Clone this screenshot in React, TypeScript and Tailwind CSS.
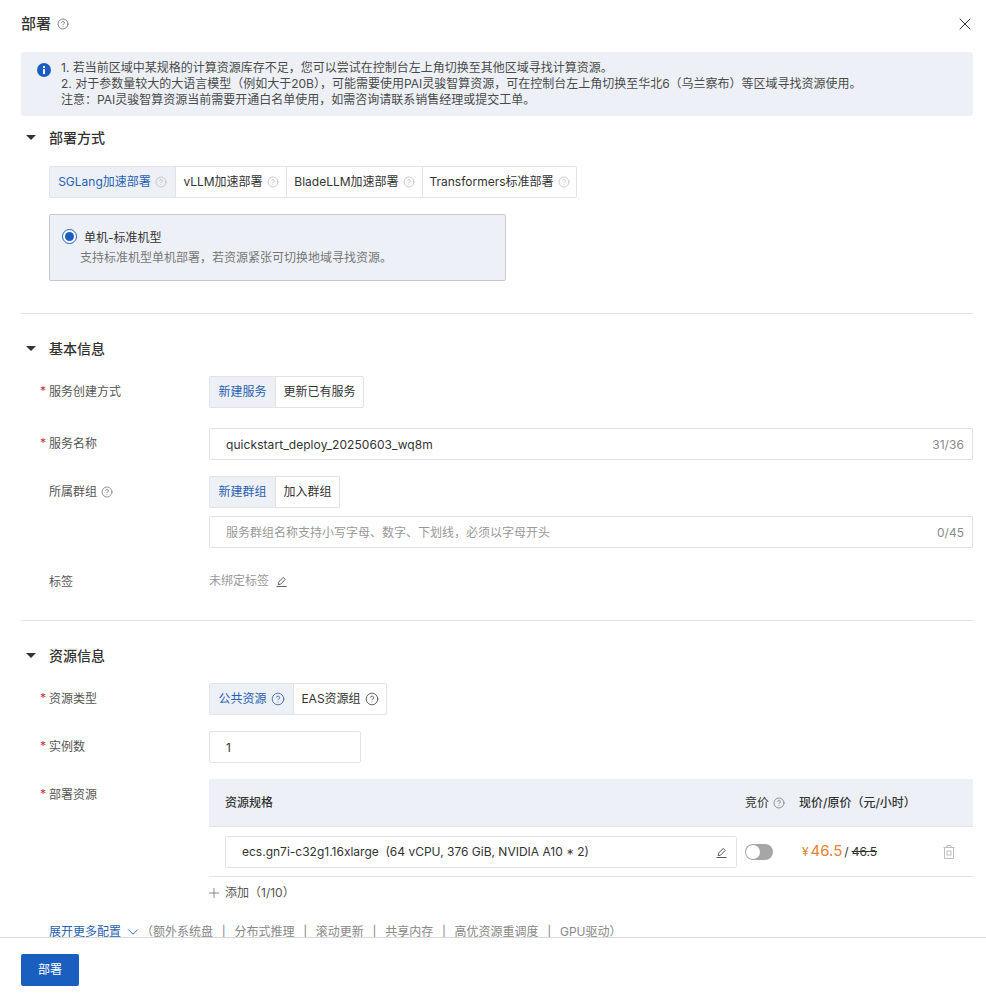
import { ChevronDown, CircleHelp, Plus, X } from 'lucide-react'
import type { ReactNode } from 'react'

function Section({ title, className = '' }: { title: string; className?: string }) {
  return (
    <div className={`flex items-center h-5 ${className}`}>
      <span className="ml-[5px] w-0 h-0 border-x-[5px] border-x-transparent border-t-[5px] border-t-[#333]" />
      <span className="ml-[13px] text-[14px] font-medium text-[#333]">{title}</span>
    </div>
  )
}

function Pencil({ className = '' }: { className?: string }) {
  return (
    <svg viewBox="0 0 11 11" fill="none" stroke="currentColor" strokeWidth="0.9" className={`w-[11px] h-[11px] ${className}`}>
      <path d="M0.5 10.5h10" />
      <path d="M2.2 8.6l0.4-2.4 4.6-4.8 2 2-4.6 4.8z" />
    </svg>
  )
}

function Row({ label, required, help, className = '', children }: { label: string; required?: boolean; help?: boolean; className?: string; children: ReactNode }) {
  return (
    <div className={`flex ${className}`}>
      <div className="relative w-[188px] pl-[28px] h-5 mt-[6px] flex items-center gap-[4px] text-[12px] text-[#555] shrink-0">
        {required && <span className="absolute left-[19px] top-0 text-[12px] text-[#c8323a]">*</span>}
        {label}
        {help && <CircleHelp size={12} strokeWidth={1.4} className="text-[#666]" />}
      </div>
      <div className="flex-1 min-w-0">{children}</div>
    </div>
  )
}

type Opt = { label: string; help?: boolean; width: string }

function Segmented({ options, helpClass = 'text-[#b5b5b5]', helpSize = 12 }: { options: Opt[]; helpClass?: string; helpSize?: number }) {
  return (
    <div className="flex h-8 w-fit border border-[#e3e3e3] rounded-[2px] text-[12px] text-[#333]">
      {options.map((o, i) => (
        <div
          key={o.label}
          className={`flex items-center justify-center gap-[4px] ${o.width} ${i === 0 ? 'bg-[#edf1f7] text-[#2a5fb0]' : 'border-l border-[#e3e3e3]'}`}
        >
          {o.label}
          {o.help && <CircleHelp size={helpSize} strokeWidth={1.4} className={i === 0 && helpSize > 12 ? 'text-[#2a5fb0]' : helpClass} />}
        </div>
      ))}
    </div>
  )
}

function TextBox({ children, right, className = '' }: { children: ReactNode; right?: string; className?: string }) {
  return (
    <div className={`flex items-center justify-between h-8 border border-[#e3e3e3] rounded-[2px] pt-px pl-4 pr-2 text-[12px] ${className}`}>
      {children}
      {right && <span className="text-[#8a8a8a]">{right}</span>}
    </div>
  )
}

const extras = ['额外系统盘', '分布式推理', '滚动更新', '共享内存', '高优资源重调度', 'GPU驱动']

export default function App() {
  return (
    <div
      className="flex flex-col h-[997px] bg-white overflow-hidden"
      style={{ fontFamily: 'Inter, "Noto Sans CJK SC", sans-serif' }}
    >
      <div className="flex-1 min-h-0 overflow-hidden pl-[21px] pr-[13px]">
        <div className="flex items-center h-[24px] mt-3 text-[#333]">
          <span className="text-[15px] font-medium">部署</span>
          <CircleHelp size={12} strokeWidth={1.4} className="ml-[6px] text-[#555]" />
          <X size={20} strokeWidth={1.2} className="ml-auto mr-[-2px] text-[#333]" />
        </div>

        <div className="flex mt-4 h-16 bg-[#edf1f7] rounded-[3px] pt-[8px] pl-[16px] text-[12px] leading-4 text-[#4a4a4a]">
          <svg viewBox="0 0 14 14" className="w-[14px] h-[14px] mt-[3px] shrink-0">
            <circle cx="7" cy="7" r="7" fill="#1a5fbf" />
            <rect x="6" y="6" width="2" height="5" fill="#fff" />
            <rect x="6" y="3" width="2" height="2" fill="#fff" />
          </svg>
          <div className="ml-[10px]">
            <p>1. 若当前区域中某规格的计算资源库存不足，您可以尝试在控制台左上角切换至其他区域寻找计算资源。</p>
            <p>2. 对于参数量较大的大语言模型（例如大于20B），可能需要使用PAI灵骏智算资源，可在控制台左上角切换至华北6（乌兰察布）等区域寻找资源使用。</p>
            <p>注意：PAI灵骏智算资源当前需要开通白名单使用，如需咨询请联系销售经理或提交工单。</p>
          </div>
        </div>

        <Section title="部署方式" className="mt-[11px]" />
        <div className="ml-[28px] mt-[19px]">
          <Segmented
            options={[
              { label: 'SGLang加速部署', help: true, width: 'w-[125px]' },
              { label: 'vLLM加速部署', help: true, width: 'w-[111px]' },
              { label: 'BladeLLM加速部署', help: true, width: 'w-[136px]' },
              { label: 'Transformers标准部署', help: true, width: 'w-[154px]' },
            ]}
          />
          <div className="flex w-[457px] h-[67px] mt-4 bg-[#edf1f7] border border-[#c9c9c9] rounded-[2px] pl-3 pt-[13px]">
            <span className="flex items-center justify-center w-[15px] h-[15px] mt-[1px] rounded-full border border-[#1a5fbf] bg-white">
              <span className="w-[9px] h-[9px] rounded-full bg-[#1a5fbf]" />
            </span>
            <div className="ml-[3px] text-[12px] leading-5">
              <div className="ml-[4px] text-[#333]">单机-标准机型</div>
              <div className="text-[#777]">支持标准机型单机部署，若资源紧张可切换地域寻找资源。</div>
            </div>
          </div>
        </div>

        <div className="border-t border-[#e3e3e3] mt-8" />

        <Section title="基本信息" className="mt-6" />
        <Row label="服务创建方式" required className="mt-[18px]">
          <Segmented
            options={[
              { label: '新建服务', width: 'w-[65px]' },
              { label: '更新已有服务', width: 'w-[88px]' },
            ]}
          />
        </Row>
        <Row label="服务名称" required className="mt-5">
          <TextBox right="31/36" className="text-[#333] tracking-[0.07px]">quickstart_deploy_20250603_wq8m</TextBox>
        </Row>
        <Row label="所属群组" help className="mt-4">
          <Segmented
            options={[
              { label: '新建群组', width: 'w-[65px]' },
              { label: '加入群组', width: 'w-[64px]' },
            ]}
          />
          <TextBox right="0/45" className="mt-2 text-[#999]">服务群组名称支持小写字母、数字、下划线，必须以字母开头</TextBox>
        </Row>
        <Row label="标签" className="mt-[18px]">
          <div className="flex items-center h-8 mt-[-1px] gap-[7px] text-[12px] text-[#999]">
            未绑定标签
            <Pencil className="text-[#555]" />
          </div>
        </Row>

        <div className="border-t border-[#e3e3e3] mt-[23px]" />

        <Section title="资源信息" className="mt-6" />
        <Row label="资源类型" required className="mt-[18px]">
          <Segmented
            helpSize={14}
            helpClass="text-[#444]"
            options={[
              { label: '公共资源', help: true, width: 'w-[83px]' },
              { label: 'EAS资源组', help: true, width: 'w-[93px]' },
            ]}
          />
        </Row>
        <Row label="实例数" required className="mt-4">
          <TextBox className="w-[152px] text-[#333]">1</TextBox>
        </Row>
        <Row label="部署资源" required className="mt-4">
          <div className="flex items-center h-12 pt-px bg-[#edf1f7] border-b border-[#e3e3e3] text-[12px] font-medium text-[#333]">
            <span className="pl-4 w-[536px]">资源规格</span>
            <span className="flex items-center gap-[4px] w-[54px] font-normal">
              竞价
              <CircleHelp size={12} strokeWidth={1.4} className="text-[#666]" />
            </span>
            <span>现价/原价（元/小时）</span>
          </div>
          <div className="flex items-center h-[50px] border-b border-[#e3e3e3]">
            <div className="flex items-center justify-between ml-4 w-[512px] h-8 pt-px border border-[#e3e3e3] rounded-[2px] pl-4 pr-[9px] text-[12px] text-[#333] whitespace-pre">
              ecs.gn7i-c32g1.16xlarge  (64 vCPU, 376 GiB, NVIDIA A10 * 2)
              <Pencil className="text-[#444]" />
            </div>
            <span className="relative ml-2 w-7 h-4 rounded-full bg-[#a6a6a6]">
              <span className="absolute left-[1px] top-[1px] w-[14px] h-[14px] rounded-full bg-white" />
            </span>
            <span className="ml-[29px] flex items-baseline w-[141px] text-[12px] text-[#333]">
              <span className="text-[#e8832f]">¥</span>
              <span className="ml-[2px] text-[15px] text-[#e8832f]">46.5</span>
              <span className="ml-[2px] mr-[3px]">/</span>
              <span className="line-through">46.5</span>
            </span>
            <svg viewBox="0 0 12 14" fill="none" stroke="#bdbdbd" strokeWidth="1" className="w-3 h-[14px]">
              <path d="M0.5 2.5h11M4 2.5V0.5h4v2M1.5 2.5v11h9v-11" />
              <rect x="4" y="6" width="4" height="4" />
            </svg>
          </div>
          <div className="flex items-center h-[30px] mt-[1px] text-[12px] text-[#555]">
            <Plus size={16} strokeWidth={1} className="ml-[-3px]" />
            <span className="ml-[3px]">添加（1/10）</span>
          </div>
        </Row>
        <div className="flex items-center h-5 ml-[28px] mt-[14px] text-[12px] text-[#888] whitespace-pre">
          <span className="text-[#2a5fb0]">展开更多配置</span>
          <ChevronDown size={18} strokeWidth={1.2} className="ml-[3px] text-[#2a5fb0]" />
          <span className="ml-[-1px]">（</span>
          {extras.map((t, i) => (
            <span key={t}>
              {i > 0 && <span className="mx-[8.7px]">|</span>}
              {t}
            </span>
          ))}
          <span>）</span>
        </div>
      </div>

      <div className="h-[60px] shrink-0 border-t border-[#d9d9d9] pl-[21px] pt-4">
        <button className="w-[58px] h-8 bg-[#1a5fbf] rounded-[2px] text-[12px] text-white">部署</button>
      </div>
    </div>
  )
}
